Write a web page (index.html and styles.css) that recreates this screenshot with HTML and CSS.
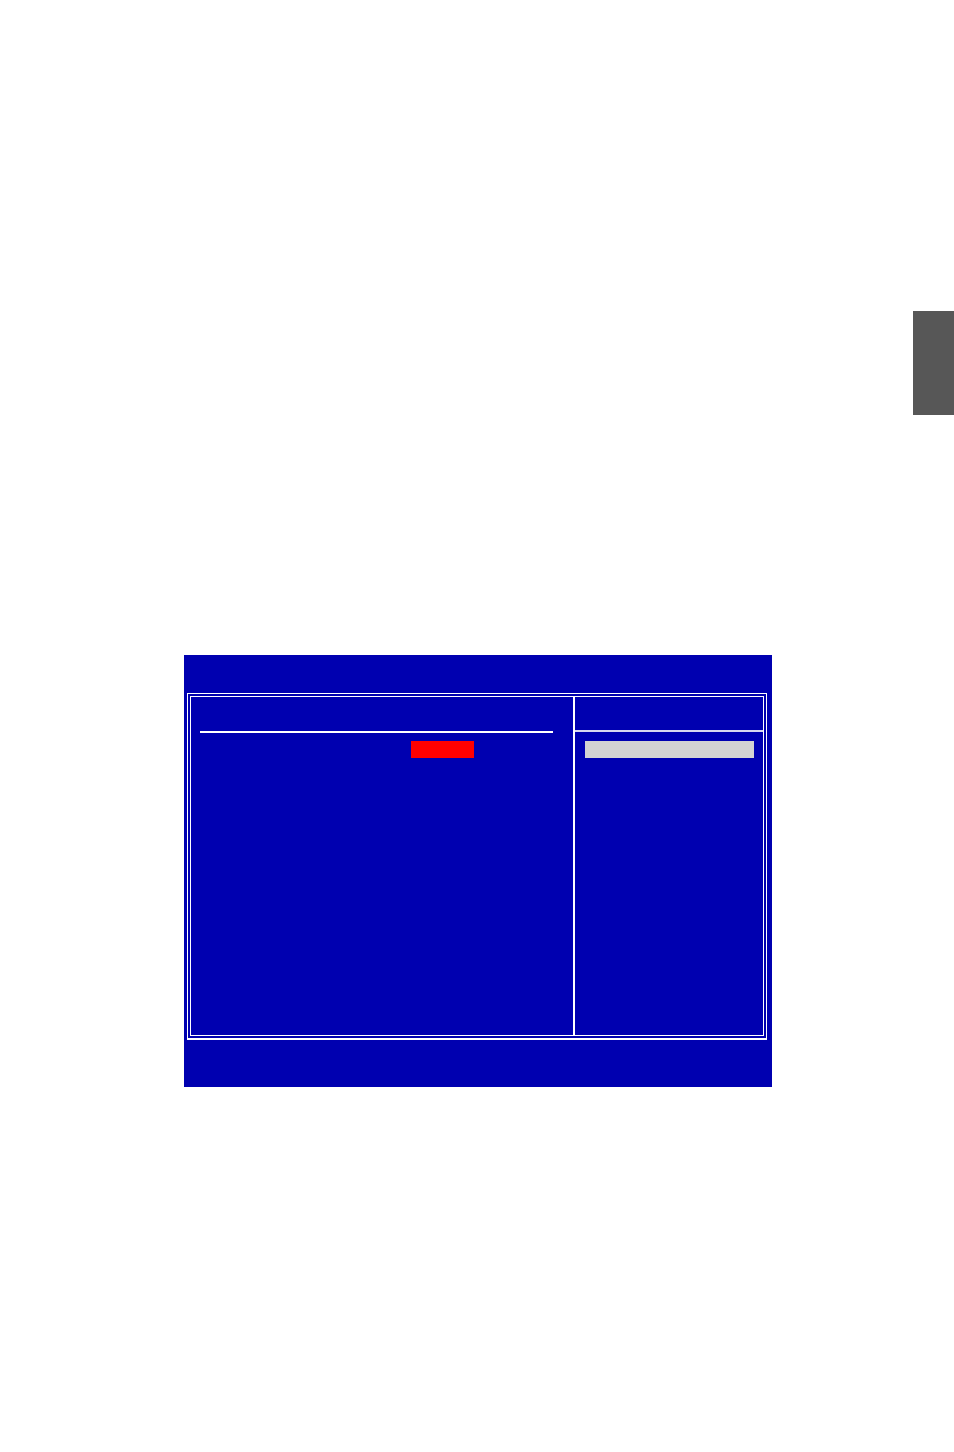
FILE: index.html
```html
<!DOCTYPE html>
<html lang="en">
<head>
    <meta charset="UTF-8">
    <meta name="viewport" content="width=device-width, initial-scale=1.0">
    <title>BIOS Setup</title>
    <link rel="stylesheet" href="styles.css">
</head>
<body>
    <div class="page">
        <div class="side-tab"></div>

        <div class="screen">
            <div class="frame">
                <div class="frame-inner">
                    <div class="menu-col">
                        <div class="menu-rule"></div>
                        <div class="menu-row">
                            <span class="value-selected"></span>
                        </div>
                    </div>
                    <div class="help-col">
                        <div class="help-rule"></div>
                        <div class="help-item"></div>
                    </div>
                </div>
            </div>
        </div>
    </div>
</body>
</html>
```

FILE: styles.css
```css
body {
    margin: 0;
    padding: 0;
    background: #FFFFFF;
    font-family: "Liberation Sans", Arial, sans-serif;
}
.page {
    width: 954px;
    min-height: 1452px;
    display: flex;
    flex-direction: column;
}
/* Chapter tab on the page edge */
.side-tab {
    width: 41px;
    height: 104px;
    margin: 311px 0 0 auto;
    background: #575757;
}
/* Setup screen */
.screen {
    width: 588px;
    height: 432px;
    margin: 240px 0 0 184px;
    padding: 38px 5px 0 3px;
    box-sizing: border-box;
    background: #0000B0;
}
.frame {
    height: 347px;
    padding: 2px;
    border: 1px solid #FFFFFF;
    border-bottom-width: 2px;
    box-sizing: border-box;
}
.frame-inner {
    height: 100%;
    border: 1px solid #FFFFFF;
    box-sizing: border-box;
    display: grid;
    grid-template-columns: 382px 1fr;
}
.menu-col {
    padding-top: 34px;
}
.menu-rule {
    height: 2px;
    width: 353px;
    margin-left: 9px;
    background: #FFFFFF;
}
.menu-row {
    margin-top: 8px;
    padding-left: 220px;
    display: flex;
}
.value-selected {
    width: 63px;
    height: 17px;
    background: #FF0000;
}
.help-col {
    border-left: 2px solid #FFFFFF;
    padding-top: 33px;
}
.help-rule {
    height: 2px;
    background: #D8D8F0;
}
.help-item {
    width: 169px;
    height: 17px;
    margin: 9px 0 0 10px;
    background: #D3D3D3;
}
```
